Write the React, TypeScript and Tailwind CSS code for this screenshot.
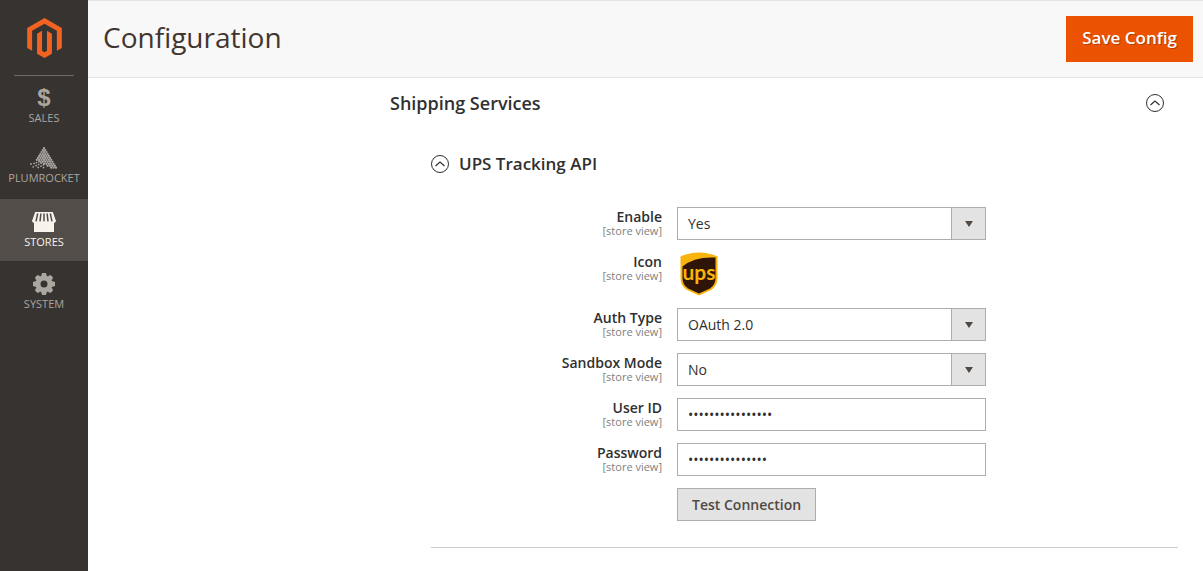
import { useState } from "react";
import type { ReactNode } from "react";
import { FaMagento } from "react-icons/fa";

function StoresIcon() {
  return (
    <svg width="24" height="20" viewBox="0 0 24 20" aria-hidden="true">
      <path
        fill="currentColor"
        d="M3.2 0H20.8L24 9Q23.6 10.6 22 10.9V20H2V10.9Q.4 10.6 0 9z"
      />
      <path
        fill="none"
        stroke="#524d49"
        strokeWidth="1.5"
        d="M5.7 1.5L4 9.3M8.9 1.5L8 9.3M12 1.5V9.3M15.1 1.5L16 9.3M18.3 1.5L20 9.3"
      />
    </svg>
  );
}

const TEETH = [0, 45, 90, 135, 180, 225, 270, 315];

function SystemIcon() {
  return (
    <svg width="22" height="22" viewBox="-11 -11 22 22" fill="currentColor" aria-hidden="true">
      {TEETH.map((angle) => (
        <path key={angle} d="M-3.2 -7L-1.9 -11H1.9L3.2 -7z" transform={`rotate(${angle})`} />
      ))}
      <circle r="5.8" fill="none" stroke="currentColor" strokeWidth="4.6" />
    </svg>
  );
}

// loose dots that break off the lower left side of the triangle
const LOOSE_DOTS = [
  [1, 17], [3.2, 19.8], [4.2, 16.4], [6, 18.6], [6.6, 15.6], [8.2, 20.4],
  [8.6, 17.4], [9, 14.4], [11, 19.2], [11.2, 16.2], [13.4, 17.8], [13.6, 20.6],
];

function PlumrocketIcon() {
  const dots: number[][] = [];
  for (let row = 0; row < 11; row++) {
    for (let col = 0; col <= row; col++) {
      if (row > 6 && col < (row - 6) * 2) continue;
      dots.push([14 + (col - row / 2) * 2.4, 1.2 + row * 1.95]);
    }
  }
  return (
    <svg width="28" height="22" viewBox="0 0 28 22" fill="currentColor" aria-hidden="true">
      {dots.map(([x, y]) => (
        <circle key={`${x}-${y}`} cx={x} cy={y} r="1.15" />
      ))}
      {LOOSE_DOTS.map(([x, y]) => (
        <circle key={`${x}-${y}`} cx={x} cy={y} r="0.9" />
      ))}
    </svg>
  );
}

function UpsLogo() {
  return (
    <svg width="38" height="44" viewBox="0 0 38 44" role="img" aria-label="UPS">
      <path
        d="M.5 4.5Q9 .5 19 .5T37.500 4.500V26Q37.500 34 31 38L19 43.500L7 38Q.5 34 .5 26z"
        fill="#f9b30d"
      />
      <path
        d="M2.500 14.500Q14 4.500 35.500 5.500V26Q35.500 33 30 36.400L19 41.500L8 36.400Q2.500 33 2.500 26z"
        fill="#2e1508"
      />
      <text
        x="19"
        y="28"
        textAnchor="middle"
        fill="#f9b30d"
        className="font-[Lato,sans-serif] text-[21px] font-bold"
      >
        ups
      </text>
    </svg>
  );
}

function CollapseIcon() {
  return (
    <svg
      width="18"
      height="18"
      viewBox="0 0 18 18"
      fill="none"
      stroke="currentColor"
      aria-hidden="true"
    >
      <circle cx="9" cy="9" r="8.5" />
      <path d="M4.500 11L9 7L13.500 11" strokeWidth="1.2" />
    </svg>
  );
}

function NavItem({
  label,
  icon,
  className,
}: {
  label: string;
  icon: ReactNode;
  className: string;
}) {
  return (
    <a href="#" className={`flex w-full flex-col items-center justify-end ${className}`}>
      <span className="flex h-7 items-center">{icon}</span>
      <span className="text-[11px] leading-3">{label}</span>
    </a>
  );
}

function Field({
  label,
  htmlFor,
  children,
}: {
  label: string;
  htmlFor?: string;
  children: ReactNode;
}) {
  return (
    <div className="grid grid-cols-[246fr_309fr_192fr]">
      <div className="flex flex-col pt-0.5 pr-[15px] text-right">
        <label htmlFor={htmlFor} className="text-sm leading-4 font-semibold">
          {label}
        </label>
        <span className="text-[11px] leading-3 text-[#808080]">[store view]</span>
      </div>
      {children}
    </div>
  );
}

function SelectField({
  id,
  label,
  options,
}: {
  id: string;
  label: string;
  options: string[];
}) {
  const [value, setValue] = useState(options[0]);

  return (
    <Field label={label} htmlFor={id}>
      <div className="relative">
        <select
          id={id}
          value={value}
          onChange={(e) => setValue(e.target.value)}
          className="h-[33px] w-full appearance-none border border-[#adadad] bg-white pr-10 pl-2.5 text-sm"
        >
          {options.map((option) => (
            <option key={option}>{option}</option>
          ))}
        </select>
        <span className="pointer-events-none absolute inset-y-0 right-0 flex w-[35px] items-center justify-center border border-[#adadad] bg-[#e3e3e3] text-[#514943]">
          <svg width="8" height="6" viewBox="0 0 8 6" fill="currentColor" aria-hidden="true">
            <path d="M0 0H8L4 6z" />
          </svg>
        </span>
      </div>
    </Field>
  );
}

function SecretField({ id, label, initial }: { id: string; label: string; initial: string }) {
  const [value, setValue] = useState(initial);

  return (
    <Field label={label} htmlFor={id}>
      <input
        id={id}
        type="password"
        value={value}
        onChange={(e) => setValue(e.target.value)}
        className="h-[33px] w-full border border-[#adadad] bg-white px-2.5 text-sm"
      />
    </Field>
  );
}

function App() {
  const [open, setOpen] = useState(true);
  const [upsOpen, setUpsOpen] = useState(true);

  return (
    <div className="flex min-h-screen bg-white font-['Open_Sans',sans-serif] text-[#303030]">
      <nav className="flex w-[88px] shrink-0 flex-col items-center bg-[#373330] text-[#aaa6a0]">
        <a href="#" aria-label="Magento" className="flex h-[75px] items-center text-[#f26322]">
          <FaMagento className="h-10 w-[35px]" />
        </a>
        <div className="w-[60px] border-t border-[#736963]" />
        <NavItem
          label="SALES"
          className="h-[61px] pb-[13px]"
          icon={
            <span className="font-['Liberation_Sans',sans-serif] text-2xl leading-6 font-bold">
              $
            </span>
          }
        />
        <NavItem label="PLUMROCKET" className="h-[62px] pb-[15px]" icon={<PlumrocketIcon />} />
        <NavItem
          label="STORES"
          className="h-[62px] bg-[#524d49] pb-[13px] text-[#f7f3eb]"
          icon={<StoresIcon />}
        />
        <NavItem label="SYSTEM" className="h-[62px] pb-[13px]" icon={<SystemIcon />} />
      </nav>

      <div className="min-w-0 flex-1">
        <header className="flex h-[78px] items-center justify-between border-y border-[#e3e3e3] bg-[#f8f8f8] pr-2.5 pl-[15px]">
          <h1 className="pb-1 text-[28px] leading-9 text-[#41362f]">Configuration</h1>
          <button className="h-[46px] bg-[#eb5202] px-4 pb-0.5 text-[17px] font-semibold text-white [text-shadow:1px_1px_0_rgba(0,0,0,0.25)]">
            Save Config
          </button>
        </header>

        <main className="pr-[25px] pl-[302px]">
          <button
            onClick={() => setOpen(!open)}
            aria-expanded={open}
            className="flex h-[50px] w-full items-center justify-between pr-3.5 text-left text-lg font-semibold"
          >
            Shipping Services
            <CollapseIcon />
          </button>

          {open && (
            <section className="ml-[41px] border-b border-[#cccccc] pt-6 pb-[26px]">
              <button
                onClick={() => setUpsOpen(!upsOpen)}
                aria-expanded={upsOpen}
                className="flex h-6 items-center gap-2.5 text-[17px] font-semibold"
              >
                <CollapseIcon />
                UPS Tracking API
              </button>

              {upsOpen && (
                <div className="flex flex-col gap-3 pt-[31px]">
                  <SelectField id="enable" label="Enable" options={["Yes", "No"]} />
                  <Field label="Icon">
                    <div className="pl-[3px]">
                      <UpsLogo />
                    </div>
                  </Field>
                  <SelectField id="auth-type" label="Auth Type" options={["OAuth 2.0"]} />
                  <SelectField id="sandbox" label="Sandbox Mode" options={["No", "Yes"]} />
                  <SecretField id="user-id" label="User ID" initial="ups-tracking-001" />
                  <SecretField id="password" label="Password" initial="tracking-secret" />
                  <div className="grid grid-cols-[246fr_309fr_192fr]">
                    <button className="col-start-2 h-[33px] justify-self-start border border-[#adadad] bg-[#e3e3e3] px-3.5 text-sm font-semibold text-[#514943]">
                      Test Connection
                    </button>
                  </div>
                </div>
              )}
            </section>
          )}
        </main>
      </div>
    </div>
  );
}

export default App;
